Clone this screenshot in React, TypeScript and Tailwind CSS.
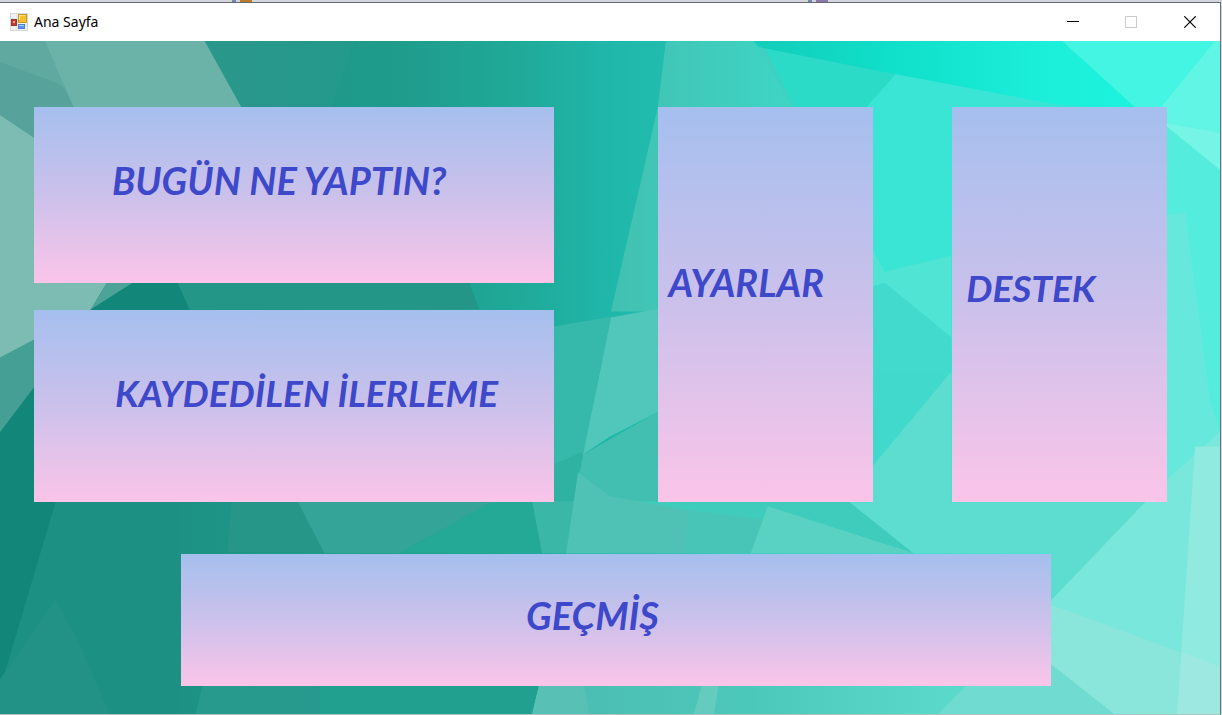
type TileProps = { label: string; className: string };

function Tile({ label, className }: TileProps) {
  return (
    <button
      type="button"
      className={`flex min-w-0 items-start whitespace-nowrap bg-linear-to-b from-[#a5bfee] via-[#cbc1eb] to-[#fbc4e9] text-left font-['Lato',sans-serif] font-bold italic text-[#3e48ca] ${className}`}
    >
      {label}
    </button>
  );
}

function Backdrop() {
  return (
    <svg
      aria-hidden="true"
      className="absolute inset-0 size-full"
      viewBox="0 41 1222 674"
      preserveAspectRatio="none"
    >
      <defs>
        <linearGradient id="base" gradientUnits="userSpaceOnUse" x1="0" y1="0" x2="1222" y2="0">
          <stop offset="0" stopColor="#138979" />
          <stop offset="0.12" stopColor="#1c9083" />
          <stop offset="0.33" stopColor="#1f9c8c" />
          <stop offset="0.43" stopColor="#20aa99" />
          <stop offset="0.5" stopColor="#1fb7aa" />
          <stop offset="0.55" stopColor="#22bdb0" />
          <stop offset="0.6" stopColor="#3ccbbb" />
          <stop offset="0.75" stopColor="#3fdccf" />
          <stop offset="1" stopColor="#58eedf" />
        </linearGradient>
        <linearGradient id="crest" gradientUnits="userSpaceOnUse" x1="755" y1="0" x2="1140" y2="0">
          <stop offset="0" stopColor="#12cdb9" />
          <stop offset="0.35" stopColor="#10dfc9" />
          <stop offset="0.8" stopColor="#1cf0db" />
          <stop offset="1" stopColor="#1cf2dd" />
        </linearGradient>
        <linearGradient id="mid" gradientUnits="userSpaceOnUse" x1="611" y1="0" x2="950" y2="0">
          <stop offset="0" stopColor="#42c0b1" />
          <stop offset="0.4" stopColor="#3fd0c0" />
          <stop offset="1" stopColor="#3be5d5" />
        </linearGradient>
        <linearGradient id="floor" gradientUnits="userSpaceOnUse" x1="540" y1="0" x2="960" y2="0">
          <stop offset="0" stopColor="#4cbbb0" />
          <stop offset="0.5" stopColor="#4cc8ba" />
          <stop offset="1" stopColor="#5bdacb" />
        </linearGradient>
        <linearGradient id="shade" gradientUnits="userSpaceOnUse" x1="230" y1="0" x2="370" y2="0">
          <stop offset="0" stopColor="#2a978b" />
          <stop offset="1" stopColor="#229a8c" />
        </linearGradient>
      </defs>
      <rect x="0" y="41" width="1222" height="674" fill="url(#base)" />

      <path d="M205 41H355L332 107H242Z" fill="url(#shade)" />
      <path d="M0 41H45L90 120L34 138L0 115Z" fill="#5fa9a0" />
      <path d="M0 62L60 84L80 107L34 138L0 115Z" fill="#57a39b" />
      <path d="M45 41H205L250 122H80Z" fill="#6bb2a8" />
      <path d="M0 115L34 138H160L107 283L91 310L0 359Z" fill="#7dbcb2" />
      <path d="M0 358L34 340V388L0 433Z" fill="#469f95" />
      <path d="M107 283H133L91 310Z" fill="#4ca398" />
      <path d="M0 433L34 388L91 310L133 283H178L190 310L100 502H56L0 690Z" fill="#128779" />
      <path d="M178 283H470L480 310H190Z" fill="#239688" />
      <path d="M0 690L56 502H180V715H0Z" fill="#1c9082" />
      <path d="M56 600L82 650L110 715H0V680Z" fill="#219285" />
      <path d="M232 502H298L325 553H228Z" fill="#259688" />
      <path d="M298 502H495L400 554H325Z" fill="#34a499" />
      <path d="M495 502L555 465V502H533L543 554H400Z" fill="#23a996" />
      <path d="M203 686H320V715H196Z" fill="#279a8d" />
      <path d="M320 686H540L533 715H320Z" fill="#219f8f" />

      <path d="M667 41H760L800 107V312H612L659 107Z" fill="url(#mid)" />
      <path d="M755 41L795 107H870L900 71Z" fill="#2cdac8" />
      <path d="M755 41H763L795 107Z" fill="#3fd0c2" />
      <path d="M900 71L1060 105H1168V502H860V107H868Z" fill="#3be5d5" />
      <path d="M755 41H1064L1142 110L1060 105L880 71L760 47Z" fill="url(#crest)" />
      <path d="M1064 41H1222L1163 112H1142Z" fill="#43f5e2" />
      <path d="M1217 41H1222V133L1163 122V107Z" fill="#60f5e5" />
      <path d="M1163 122L1222 133V174Z" fill="#76f4e5" />
      <path d="M1163 122L1222 170V440H1163Z" fill="#54ecdc" />
      <path d="M1168 216L1187 212L1212 400L1168 481Z" fill="#66e9dc" />
      <path d="M1212 400L1222 432L1168 481Z" fill="#66e9dc" />

      <path d="M555 327L613 317L600 375L585 455L555 466Z" fill="#36b9aa" />
      <path d="M612 318L660 309V412L611 437L584 455Z" fill="#51c6ba" />
      <path d="M555 465L584 452L575 502H555Z" fill="#30b2a2" />
      <path d="M584 455L660 412V502H575Z" fill="#42bfb0" />
      <path d="M575 502H850L915 554H567Z" fill="#40ccbc" />
      <path d="M533 502H576L567 554H543Z" fill="#3bb7a7" />
      <path d="M579 473L611 497L690 511L687 554H567Z" fill="#4fc1b5" />
      <path d="M690 511L765 520L752 554H687Z" fill="#48c5b7" />
      <path d="M769 507L915 554H752Z" fill="#59d2c4" />

      <path d="M874 355L953 350V375L874 468Z" fill="#41d9cc" />
      <path d="M874 250L886 272L953 256V338L886 283L874 287Z" fill="#50e4d5" />
      <path d="M874 287L886 283L953 338V375L874 370Z" fill="#41dacd" />
      <path d="M953 372V502H1168V481L1052 610V554H915L850 502H874V467Z" fill="#5dddcf" />
      <path d="M540 686H968L940 715H533Z" fill="url(#floor)" />
      <path d="M703 686H720L715 715H695Z" fill="#65cbbf" />
      <path d="M540 686H585L590 715H533Z" fill="#58c0b5" />
      <path d="M968 686L1050 662L1120 715H940Z" fill="#70dcd1" />
      <path d="M1222 432L1168 481L1050 604L1222 670Z" fill="#79e7dc" />
      <path d="M1050 604L1222 668V715H1116L1050 663Z" fill="#8ae5da" />
      <path d="M1197 447H1222V715H1179Z" fill="#90eae0" />
      <path d="M1184 653L1222 668V715H1179Z" fill="#9de9e1" />
    </svg>
  );
}

function AppIcon() {
  return (
    <svg aria-hidden="true" className="size-[18px] shrink-0" viewBox="0 0 18 18">
      <rect x="0.5" y="0.5" width="17" height="17" fill="#f2f2f2" stroke="#d3d5da" />
      <path d="M7 1V17M1 6H17M1 12H17" stroke="#dcdee2" />
      <rect x="8.5" y="1.5" width="8" height="8" fill="#f4c12d" stroke="#c99a2a" />
      <path d="M9.500 7V2.500H15" fill="none" stroke="#ffe48a" />
      <rect x="1.500" y="6.500" width="5" height="6" fill="#c73a30" stroke="#9c3630" />
      <rect x="3" y="8" width="2" height="2" fill="#f29a8b" />
      <rect x="8.500" y="11.500" width="6" height="4" fill="#5b96ea" stroke="#4f7fd0" />
      <path d="M9 12.500H14" stroke="#a5c8fa" />
    </svg>
  );
}

export default function App() {
  return (
    <div className="flex min-h-screen flex-col bg-[#d3d5dd]">
      <div aria-hidden="true" className="flex h-0.5 shrink-0 items-stretch">
        <span className="ml-[232px] h-0.5 w-1 bg-[#7487b4]" />
        <span className="ml-1 h-0.5 w-3 bg-[#bd7b25]" />
        <span className="ml-[556px] h-0.5 w-1 bg-[#7487b4]" />
        <span className="ml-1 h-0.5 w-3 bg-[#8a78a8]" />
      </div>
      <div className="mr-px flex grow flex-col border-t border-r border-b border-t-[#66696d] border-r-[#5f7774] border-b-[#a9c6c1]">
        <header className="flex h-[38px] shrink-0 items-center bg-white pl-2.5">
          <AppIcon />
          <h1 className="ml-1.5 grow font-['Noto_Sans',sans-serif] text-sm text-black">Ana Sayfa</h1>
          <div className="flex h-full">
            <button type="button" aria-label="Simge durumuna küçült" className="flex w-[58px] items-center justify-center">
              <svg className="h-3 w-3" viewBox="0 0 12 12"><path d="M0 5.500H12" stroke="#000" /></svg>
            </button>
            <button type="button" disabled aria-label="Ekranı kapla" className="flex w-[58px] items-center justify-center">
              <svg className="h-3 w-3" viewBox="0 0 12 12"><rect x="0.500" y="0.500" width="11" height="11" fill="none" stroke="#cccccc" /></svg>
            </button>
            <button type="button" aria-label="Kapat" className="flex w-[60px] items-center justify-center">
              <svg className="h-3 w-3" viewBox="0 0 12 12"><path d="M0.300 0.300L11.700 11.700M11.700 0.300L0.300 11.700" stroke="#000" strokeWidth="1.200" /></svg>
            </button>
          </div>
        </header>
        <main className="relative flex grow flex-col overflow-hidden">
          <Backdrop />
          <div className="relative flex grow flex-col pt-[66px] pb-7">
            <div className="grid grow grid-cols-[521fr_509fr] gap-[104px] pr-[53px] pl-[34px]">
              <div className="flex min-w-0 flex-col gap-[27px]">
                <Tile label="BUGÜN NE YAPTIN?" className="h-[176px] pt-[49px] pl-[78px] text-[38px]/[48px]" />
                <Tile label="KAYDEDİLEN İLERLEME" className="min-h-[192px] grow pt-[59px] pl-[81px] text-[37px]/[48px]" />
              </div>
              <div className="grid min-w-0 grid-cols-2 gap-[79px]">
                <Tile label="AYARLAR" className="pt-[151px] pl-2.5 text-[38px]/[48px]" />
                <Tile label="DESTEK" className="pt-[157px] pl-3.5 text-[37px]/[48px]" />
              </div>
            </div>
            <div className="mt-[52px] mr-[169px] ml-[181px] flex">
              <Tile label="GEÇMİŞ" className="h-[132px] grow pt-[37px] pl-[345px] text-[38px]/[48px]" />
            </div>
          </div>
        </main>
      </div>
    </div>
  );
}
